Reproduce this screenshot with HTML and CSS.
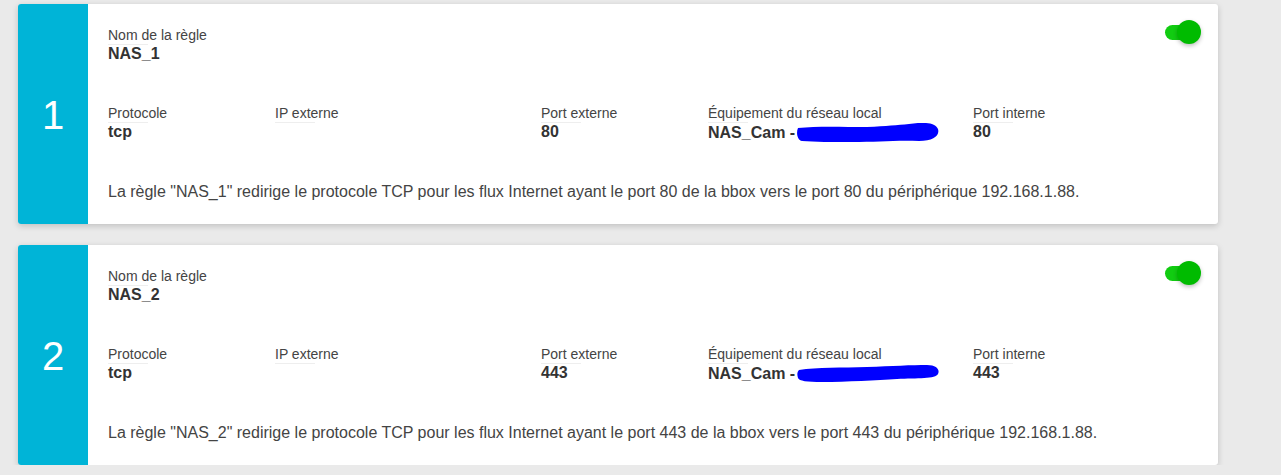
FILE: index.html
```html
<!DOCTYPE html>
<html lang="fr">
<head>
<meta charset="utf-8">
<link rel="stylesheet" href="styles.css">
</head>
<body>
<div class="list">
  <div class="card">
    <div class="num">1</div>
    <div class="content">
      <div class="toggle"><span class="track"></span><span class="knob"></span></div>
      <div class="field">
        <div class="label">Nom de la règle</div>
        <div class="value">NAS_1</div>
      </div>
      <div class="grid">
        <div class="field"><div class="label">Protocole</div><div class="value">tcp</div></div>
        <div class="field"><div class="label">IP externe</div><div class="value"></div></div>
        <div class="field"><div class="label">Port externe</div><div class="value">80</div></div>
        <div class="field"><div class="label">Équipement du réseau local</div><div class="value">NAS_Cam - <svg class="redact" width="142" height="20" viewBox="0 0 142 20"><path d="M1 5 C20 3 45 4 70 4 C90 3 100 2 112 1 C125 -1 138 -1 141 6 C143 13 136 18 122 18 C100 17 80 19 55 19 C35 19 18 19 5 18 C0 17 -1 9 1 5 Z" fill="#0000ff"/></svg></div></div>
        <div class="field"><div class="label">Port interne</div><div class="value">80</div></div>
      </div>
      <p class="desc">La règle "NAS_1" redirige le protocole TCP pour les flux Internet ayant le port 80 de la bbox vers le port 80 du périphérique 192.168.1.88.</p>
    </div>
  </div>
  <div class="card">
    <div class="num">2</div>
    <div class="content">
      <div class="toggle"><span class="track"></span><span class="knob"></span></div>
      <div class="field">
        <div class="label">Nom de la règle</div>
        <div class="value">NAS_2</div>
      </div>
      <div class="grid">
        <div class="field"><div class="label">Protocole</div><div class="value">tcp</div></div>
        <div class="field"><div class="label">IP externe</div><div class="value"></div></div>
        <div class="field"><div class="label">Port externe</div><div class="value">443</div></div>
        <div class="field"><div class="label">Équipement du réseau local</div><div class="value">NAS_Cam - <svg class="redact" width="142" height="20" viewBox="0 0 142 20"><path d="M2 6 C20 3 45 4 70 3 C95 2 115 1 130 1 C140 1 143 6 141 10 C139 15 120 14 100 15 C80 16 50 18 25 18 C10 18 2 17 1 14 C0 11 0 8 2 6 Z" fill="#0000ff"/></svg></div></div>
        <div class="field"><div class="label">Port interne</div><div class="value">443</div></div>
      </div>
      <p class="desc">La règle "NAS_2" redirige le protocole TCP pour les flux Internet ayant le port 443 de la bbox vers le port 443 du périphérique 192.168.1.88.</p>
    </div>
  </div>
</div>
</body>
</html>
```
FILE: styles.css
```css
html, body {
  margin: 0;
  padding: 0;
}
body {
  background: #eaeaea;
  font-family: "Liberation Sans", Arial, sans-serif;
  color: #444;
}
.list {
  padding: 4px 0 0 18px;
  display: flex;
  flex-direction: column;
  gap: 21px;
}
.card {
  width: 1200px;
  height: 220px;
  display: flex;
  background: #fff;
  border-radius: 3px;
  overflow: hidden;
  box-shadow: 0 2px 6px rgba(0,0,0,0.18);
}
.num {
  width: 70px;
  flex: none;
  background: #00b4d7;
  color: #fff;
  font-size: 40px;
  display: flex;
  align-items: center;
  justify-content: center;
  padding-top: 2px;
}
.content {
  position: relative;
  flex: 1;
  padding: 22px 20px 0 20px;
}
.label {
  font-size: 14px;
  line-height: 19px;
  color: #444;
  position: relative;
}
.label::after {
  content: "";
  position: absolute;
  left: 0;
  bottom: 0;
  width: 40px;
  height: 1px;
  background: #eee;
}
.value {
  font-size: 16px;
  font-weight: bold;
  line-height: 18px;
  color: #333;
  min-height: 18px;
  white-space: nowrap;
}
.grid {
  margin-top: 41px;
  display: grid;
  grid-template-columns: 167px 266px 167px 265px 1fr;
}
.desc {
  margin: 39px 0 0 0;
  font-size: 16px;
  line-height: 20px;
  color: #444;
}
.redact {
  display: inline-block;
  vertical-align: -5px;
  margin-left: -3px;
}
.toggle {
  position: absolute;
  top: 16px;
  right: 17px;
  width: 36px;
  height: 24px;
}
.track {
  position: absolute;
  left: 0;
  top: 5px;
  width: 26px;
  height: 15px;
  border-radius: 8px;
  background: #11cc11;
}
.knob {
  position: absolute;
  right: 0;
  top: 0;
  width: 24px;
  height: 24px;
  border-radius: 50%;
  background: #00bb00;
  box-shadow: 0 2px 4px rgba(0,0,0,0.25);
}
```
